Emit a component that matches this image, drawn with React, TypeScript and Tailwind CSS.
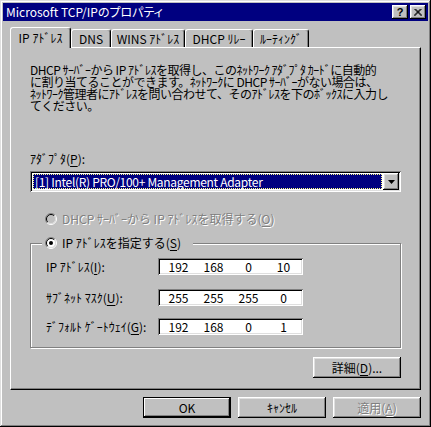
import React from "react";

const raised =
  "shadow-[inset_-1px_-1px_#000,inset_1px_1px_#fff,inset_-2px_-2px_#808080,inset_2px_2px_#dfdfdf]";
const sunken =
  "shadow-[inset_1px_1px_#808080,inset_-1px_-1px_#fff,inset_2px_2px_#000,inset_-2px_-2px_#dfdfdf]";
const disabledText = "text-[#808080] [text-shadow:1px_1px_0_#fff]";

function U({ children }: { children: React.ReactNode }) {
  return <span className="underline underline-offset-[2px]">{children}</span>;
}

function Radio({ checked, disabled }: { checked?: boolean; disabled?: boolean }) {
  return (
    <svg width="12" height="12" viewBox="0 0 12 12" className="shrink-0">
      <circle cx="6" cy="6" r="4.5" fill={disabled ? "#c0c0c0" : "#fff"} />
      <path d="M2.1 9.9 A5.5 5.5 0 0 1 9.9 2.1" stroke="#808080" fill="none" />
      <path d="M9.9 2.1 A5.5 5.5 0 0 1 2.1 9.9" stroke="#fff" fill="none" />
      <path d="M2.8 9.2 A4.5 4.5 0 0 1 9.2 2.8" stroke="#000" fill="none" />
      <path d="M9.2 2.8 A4.5 4.5 0 0 1 2.8 9.2" stroke="#dfdfdf" fill="none" />
      {checked && <circle cx="6" cy="6" r="2" fill="#000" />}
    </svg>
  );
}

function IpField({ parts }: { parts: string[] }) {
  return (
    <div className={`w-[145px] h-[17px] bg-white ${sunken} flex items-center pl-[3px]`}>
      {parts.map((p, i) => (
        <span key={i} className="w-[35px] text-center leading-[12px]">
          {p}
        </span>
      ))}
    </div>
  );
}

const tabs = [
  { label: "DNS", w: "w-[40px]" },
  { label: "WINS ｱﾄﾞﾚｽ", w: "w-[74px]" },
  { label: "DHCP ﾘﾚｰ", w: "w-[68px]" },
  { label: "ﾙｰﾃｨﾝｸﾞ", w: "w-[56px]" },
];

const intro = [
  "DHCP ｻｰﾊﾞｰから IP ｱﾄﾞﾚｽを取得し、このﾈｯﾄﾜｰｸ ｱﾀﾞﾌﾟﾀ ｶｰﾄﾞに自動的",
  "に割り当てることができます。ﾈｯﾄﾜｰｸに DHCP ｻｰﾊﾞｰがない場合は、",
  "ﾈｯﾄﾜｰｸ管理者にｱﾄﾞﾚｽを問い合わせて、そのｱﾄﾞﾚｽを下のﾎﾞｯｸｽに入力し",
  "てください。",
];

export default function App() {
  return (
    <div
      className={`w-[431px] h-[427px] bg-[#c0c0c0] text-black text-[12px] leading-[12px] font-['Noto_Sans_CJK_JP',sans-serif] flex flex-col p-[3px] shadow-[inset_-1px_-1px_#000,inset_1px_1px_#dfdfdf,inset_-2px_-2px_#808080,inset_2px_2px_#fff]`}
    >
      {/* title bar */}
      <div className="h-[18px] bg-[#000080] text-white flex items-center pl-[3px] pr-[2px]">
        <span className="flex-1 [font-feature-settings:'palt']">Microsoft TCP/IPのプロパティ</span>
        <div className={`w-[16px] h-[14px] bg-[#c0c0c0] ${raised} flex items-center justify-center text-black font-bold text-[11px] font-['Liberation_Sans',sans-serif]`}>
          ?
        </div>
        <div className={`ml-[2px] w-[16px] h-[14px] bg-[#c0c0c0] ${raised} flex items-center justify-center`}>
          <svg width="8" height="7" viewBox="0 0 8 7">
            <path d="M0.5 0 L7.5 7 M1.5 0 L8 6.5 M7.5 0 L0.5 7 M6.5 0 L0 6.5" stroke="#000" strokeWidth="1" />
          </svg>
        </div>
      </div>

      <div className="mx-[7px] mt-[6px] flex flex-col">
        {/* tabs */}
        <div className="flex items-end">
          <div className="relative z-10 -mb-px w-[61px] h-[21px] bg-[#c0c0c0] border-t border-l border-white border-r border-r-black shadow-[inset_-1px_0_#808080] rounded-tl-[3px] rounded-tr-[3px] flex items-center justify-center pb-[1px]">
            IP ｱﾄﾞﾚｽ
          </div>
          {tabs.map((t) => (
            <div
              key={t.label}
              className={`${t.w} h-[18px] border-t border-l border-white border-r border-r-black shadow-[inset_-1px_0_#808080] rounded-tl-[3px] rounded-tr-[3px] flex items-center justify-center`}
            >
              {t.label}
            </div>
          ))}
        </div>

        {/* panel */}
        <div className="h-[343px] border border-t-white border-l-white border-r-black border-b-black shadow-[inset_-1px_-1px_#808080] pt-[16px] px-[19px] flex flex-col">
          <div className="flex flex-col tracking-[-0.5px]">
            {intro.map((line) => (
              <div key={line} className="h-[12px] whitespace-nowrap">
                {line}
              </div>
            ))}
          </div>

          <div className="mt-[41px]">
            ｱﾀﾞﾌﾟﾀ(<U>P</U>):
          </div>

          <div className={`mt-[6px] h-[21px] w-full bg-white ${sunken} p-[2px] flex`}>
            <div className="flex-1 m-[1px] bg-[#000080] text-white border border-dotted border-[#ffff80] flex items-center pl-[1px] whitespace-nowrap tracking-[-0.3px]">
              [1] Intel(R) PRO/100+ Management Adapter
            </div>
            <div className={`w-[16px] h-full bg-[#c0c0c0] ${raised} flex items-center justify-center`}>
              <svg width="7" height="4" viewBox="0 0 7 4">
                <path d="M0 0 H7 L3.5 4 Z" fill="#000" />
              </svg>
            </div>
          </div>

          <div className={`mt-[20px] h-[14px] pl-[15px] flex items-center ${disabledText}`}>
            <Radio disabled />
            <span className="ml-[5px]">
              DHCP ｻｰﾊﾞｰから IP ｱﾄﾞﾚｽを取得する(<U>O</U>)
            </span>
          </div>

          <fieldset className="mt-[10px] border border-[#808080] shadow-[1px_1px_0_#fff,inset_1px_1px_0_#fff]">
            <legend className="ml-[11px] pl-[3px] pr-[12px] h-[14px] flex items-center bg-[#c0c0c0]">
              <Radio checked />
              <span className="ml-[5px]">
                IP ｱﾄﾞﾚｽを指定する(<U>S</U>)
              </span>
            </legend>
            <div className="pl-[15px] pt-[8px] pb-[12px] flex flex-col">
              <div className="flex items-center">
                <span className="w-[112px]">
                  IP ｱﾄﾞﾚｽ(<U>I</U>):
                </span>
                <IpField parts={["192", "168", "0", "10"]} />
              </div>
              <div className="mt-[14px] flex items-center">
                <span className="w-[112px]">
                  ｻﾌﾞﾈｯﾄ ﾏｽｸ(<U>U</U>):
                </span>
                <IpField parts={["255", "255", "255", "0"]} />
              </div>
              <div className="mt-[12px] flex items-center">
                <span className="w-[112px]">
                  ﾃﾞﾌｫﾙﾄ ｹﾞｰﾄｳｪｲ(<U>G</U>):
                </span>
                <IpField parts={["192", "168", "0", "1"]} />
              </div>
            </div>
          </fieldset>

          <div className="mt-[9px] flex justify-end">
            <button className={`w-[88px] h-[21px] bg-[#c0c0c0] ${raised} flex items-center justify-center`}>
              詳細(<U>D</U>)...
            </button>
          </div>
        </div>

        {/* dialog buttons */}
        <div className="mt-[7px] flex justify-end gap-[7px]">
          <button className="w-[88px] h-[21px] bg-[#c0c0c0] border border-black shadow-[inset_-1px_-1px_#000,inset_1px_1px_#fff,inset_-2px_-2px_#808080] flex items-center justify-center">
            OK
          </button>
          <button className={`w-[88px] h-[21px] bg-[#c0c0c0] ${raised} flex items-center justify-center`}>
            ｷｬﾝｾﾙ
          </button>
          <button className={`w-[88px] h-[21px] bg-[#c0c0c0] ${raised} flex items-center justify-center ${disabledText}`}>
            適用(<U>A</U>)
          </button>
        </div>
      </div>
    </div>
  );
}
